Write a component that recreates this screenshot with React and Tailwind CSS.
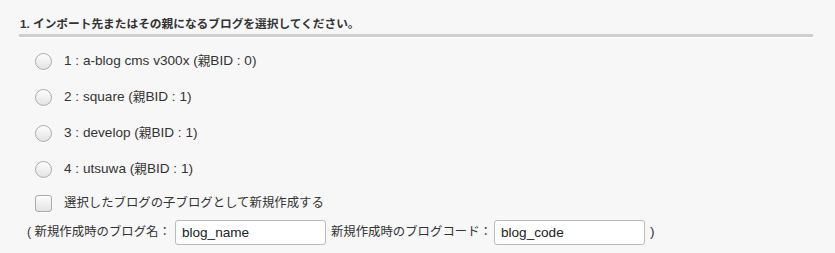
import React from "react";

const blogs = [
  { id: 1, name: "a-blog cms v300x", pbid: 0 },
  { id: 2, name: "square", pbid: 1 },
  { id: 3, name: "develop", pbid: 1 },
  { id: 4, name: "utsuwa", pbid: 1 },
];

const font = {
  fontFamily: '"Liberation Sans", "Noto Sans CJK JP", sans-serif',
};

const Radio = () => (
  <span className="inline-block w-[17px] h-[17px] rounded-full border border-[#aaa] bg-gradient-to-b from-[#fdfdfd] to-[#e3e3e3] shadow-[0_1px_0_#fff]" />
);

const Checkbox = () => (
  <span className="inline-block w-[17px] h-[17px] rounded-[3px] border border-[#aaa] bg-gradient-to-b from-[#fdfdfd] to-[#e3e3e3] shadow-[0_1px_0_#fff]" />
);

export default function App() {
  return (
    <div className="w-[835px] h-[253px] bg-[#f7f7f7] text-[#333] overflow-hidden" style={font}>
      <div className="pt-[15px] pl-[19px] pr-[22px]">
        {/* heading */}
        <h2 className="pl-[1px] text-[11.7px] font-bold leading-[18px] text-[#333]">
          1. インポート先またはその親になるブログを選択してください。
        </h2>
        <div className="mt-[1px] h-[3px] bg-[#cfcfcf] border-b border-white box-content" />

        {/* blog list */}
        <div className="pl-[16px] pt-[5px]">
          {blogs.map((b) => (
            <label key={b.id} className="flex items-center gap-[12px] h-[36px] text-[13.6px]">
              <Radio />
              <span>
                {b.id} : {b.name} (<span className="text-[12.6px]">親</span>BID : {b.pbid})
              </span>
            </label>
          ))}
          <label className="flex items-center gap-[12px] h-[32px] text-[12.4px]">
            <Checkbox />
            <span>選択したブログの子ブログとして新規作成する</span>
          </label>
        </div>

        {/* new blog fields */}
        <div className="flex items-center pl-[8px] text-[12.4px] h-[26px]">
          <span>( 新規作成時のブログ名：</span>
          <input
            readOnly
            value="blog_name"
            className="ml-[4px] w-[151px] h-[25px] px-[6px] bg-white border border-[#bbb] rounded-[3px] text-[13.6px] text-[#222] outline-none"
          />
          <span className="ml-[5px]">新規作成時のブログコード：</span>
          <input
            readOnly
            value="blog_code"
            className="ml-[2px] w-[151px] h-[25px] px-[6px] bg-white border border-[#bbb] rounded-[3px] text-[13.6px] text-[#222] outline-none"
          />
          <span className="ml-[5px] text-[13.6px]">)</span>
        </div>
      </div>
    </div>
  );
}
